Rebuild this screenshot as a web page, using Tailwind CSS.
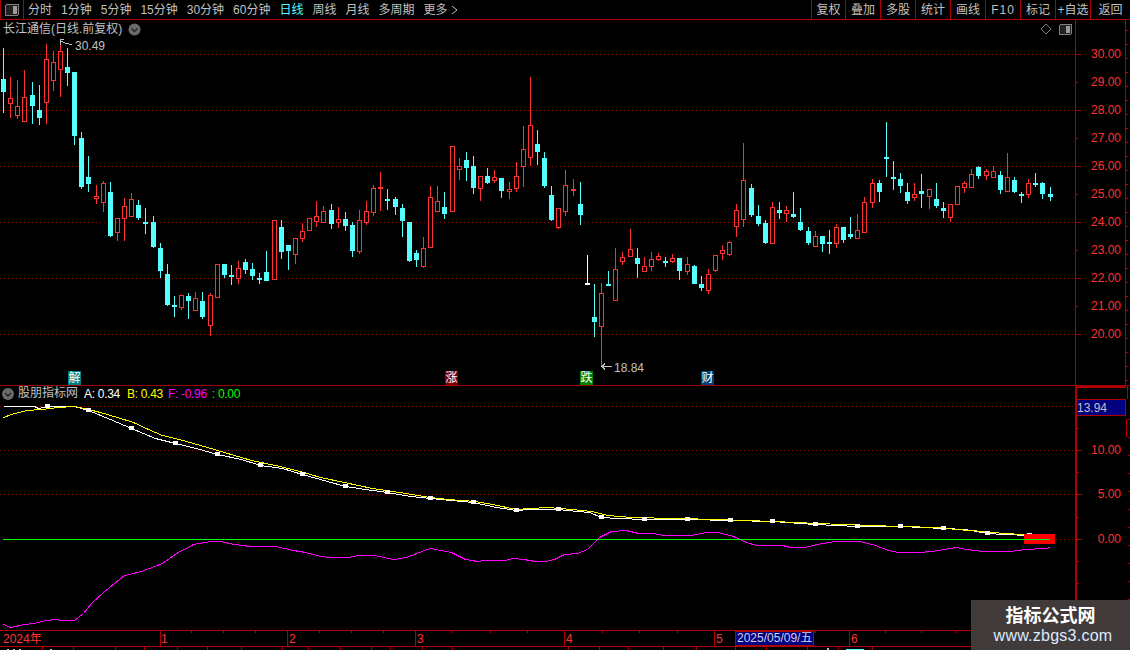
<!DOCTYPE html>
<html lang="zh-CN">
  <head>
    <meta charset="UTF-8" />
    <title>长江通信 日线</title>
    <script src="https://cdn.jsdelivr.net/npm/@tailwindcss/browser@4"></script>
  </head>
  <body class="relative w-[1130px] h-[650px] overflow-hidden bg-black text-[12px] leading-none text-[#c0c0c0] font-['Liberation_Sans','Noto_Sans_CJK_SC',sans-serif]">
    <!-- top toolbar -->
    <div class="flex h-[20px] border-b border-[#b00000]">
      <div class="flex w-[24px] items-center justify-center border-x border-[#b00000]">
        <svg width="14" height="12" viewBox="0 0 14 12" shape-rendering="crispEdges">
          <rect x="0.5" y="0.5" width="13" height="11" rx="1.5" fill="#222" stroke="#808080" />
          <rect x="8" y="2" width="4" height="8" fill="#9a9a9a" />
        </svg>
      </div>
      <nav class="flex items-center gap-[9px] pl-[4px]">
        <span>分时</span><span>1分钟</span><span>5分钟</span><span>15分钟</span><span>30分钟</span><span>60分钟</span>
        <span class="text-[#54ffff]">日线</span><span>周线</span><span>月线</span><span>多周期</span>
        <span class="flex items-center gap-[3px]">更多
          <svg width="7" height="10" viewBox="0 0 7 10"><path d="M1 1l5 4-5 4" fill="none" stroke="#c0c0c0" /></svg>
        </span>
      </nav>
      <div class="ml-auto flex">
        <span class="flex w-[34px] items-center justify-center border-l border-[#b00000]">复权</span>
        <span class="flex w-[35px] items-center justify-center border-l border-[#b00000]">叠加</span>
        <span class="flex w-[35px] items-center justify-center border-l border-[#b00000]">多股</span>
        <span class="flex w-[35px] items-center justify-center border-l border-[#b00000]">统计</span>
        <span class="flex w-[35px] items-center justify-center border-l border-[#b00000]">画线</span>
        <span class="flex w-[35px] items-center justify-center border-l border-[#b00000] tracking-[1px]">F10</span>
        <span class="flex w-[35px] items-center justify-center border-l border-[#b00000]">标记</span>
        <span class="flex w-[35px] items-center justify-center border-l border-[#b00000]">+自选</span>
        <span class="flex w-[40px] items-center justify-center border-l border-[#b00000]">返回</span>
      </div>
    </div>

    <!-- price panel -->
    <div class="flex h-[366px] border-b border-[#a00000]">
      <div class="relative w-[1075px]">
        <svg id="price-chart" class="absolute inset-0" width="1075" height="365" viewBox="0 20 1075 365" shape-rendering="crispEdges"></svg>
        <div class="absolute left-[3px] top-[3px] flex items-center gap-[6px]">
          <span class="leading-[13px]">长江通信(日线.前复权)</span>
          <svg width="13" height="13" viewBox="0 0 13 13"><circle cx="6.5" cy="6.5" r="6" fill="#6a6a6a" /><path d="M3.5 5.5l3 3 3-3" fill="none" stroke="#222" stroke-width="1.4" /></svg>
        </div>
        <span class="absolute left-[75px] top-[20px]">30.49</span>
        <span class="absolute left-[614px] top-[342px]">18.84</span>
        <span class="absolute left-[68px] bottom-0 flex h-[14px] w-[13px] items-center justify-center bg-[#008080] text-white">解</span>
        <span class="absolute left-[445px] bottom-0 flex h-[14px] w-[13px] items-center justify-center bg-[#800000] text-white">涨</span>
        <span class="absolute left-[580px] bottom-0 flex h-[14px] w-[13px] items-center justify-center bg-[#008000] text-white">跌</span>
        <span class="absolute left-[701px] bottom-0 flex h-[14px] w-[13px] items-center justify-center bg-[#003f6f] text-white">财</span>
        <div class="absolute right-[3px] top-[3px] flex items-center gap-[7px]">
          <svg width="12" height="12" viewBox="0 0 12 12"><path d="M6 1l5 5-5 5-5-5z" fill="none" stroke="#808080" /></svg>
          <svg width="13" height="11" viewBox="0 0 13 11" shape-rendering="crispEdges">
            <rect x="0.5" y="0.5" width="12" height="10" rx="1.5" fill="#222" stroke="#808080" />
            <rect x="7" y="2" width="4" height="7" fill="#9a9a9a" />
          </svg>
        </div>
      </div>
      <svg id="price-axis" width="55" height="365" viewBox="1075 20 55 365" shape-rendering="crispEdges"></svg>
    </div>

    <!-- indicator panel -->
    <div class="flex h-[244px]">
      <div class="relative w-[1075px]">
        <svg id="indicator-chart" class="absolute inset-0" width="1075" height="244" viewBox="0 386 1075 244" shape-rendering="crispEdges"></svg>
        <div class="absolute left-[2px] top-[1px] flex items-center tracking-[-0.3px]">
          <svg class="mr-[4px]" width="12" height="12" viewBox="0 0 12 12"><circle cx="6" cy="6" r="6" fill="#6a6a6a" /><path d="M3 5l3 3 3-3" fill="none" stroke="#222" stroke-width="1.4" /></svg>
          <span class="mr-[6px] leading-[13px] tracking-normal">股朋指标网</span>
          <span class="mr-[7px] text-white">A: 0.34</span>
          <span class="mr-[5px] text-[#ffff00]">B: 0.43</span>
          <span class="mr-[5px] text-[#ff00ff]">F: -0.96</span>
          <span class="text-[#00ff00]">: 0.00</span>
        </div>
      </div>
      <svg id="indicator-axis" width="55" height="244" viewBox="1075 386 55 244" shape-rendering="crispEdges"></svg>
    </div>

    <!-- time axis -->
    <svg id="time-axis" class="block" width="1130" height="20" viewBox="0 630 1130 20" shape-rendering="crispEdges"></svg>

    <!-- watermark -->
    <div class="absolute bottom-0 right-0 flex h-[50px] w-[159px] flex-col items-center bg-[#403b3a] pt-[6px]">
      <span class="text-[18px] font-bold leading-[20px] text-white">指标公式网</span>
      <span class="pl-[5px] text-[16px] leading-[19px] tracking-[0.25px] text-[#dceaff]">www.zbgs3.com</span>
    </div>

    <script>
      const RED = "#ff3232";
      const CYAN = "#54ffff";
      const LINE = "#b00000";
      const GRID = "#980000";

      // x, colour (0 cyan, 1 red, 2 white), high, body top, body bottom, low -- in page pixels
      const candles = [
        [3,0,48,79,92,113],[10,1,77,98,104,118],[17,1,80,106,116,119],[24,1,70,97,122,122],
        [32,0,82,95,106,124],[39,0,85,110,118,125],[46,1,44,59,103,124],[53,1,51,62,81,91],
        [60,1,43,51,70,97],[67,0,48,67,73,86],[74,0,72,72,136,145],[81,0,132,138,187,189],
        [88,0,156,177,184,192],[96,1,185,196,199,204],[103,1,181,183,203,212],[110,0,182,192,236,237],
        [117,1,218,218,233,241],[124,1,198,206,219,241],[131,1,193,199,217,217],[138,0,200,205,218,220],
        [145,0,208,222,224,234],[153,0,216,222,247,248],[160,0,243,248,271,278],[167,0,264,274,305,306],
        [174,0,296,305,307,317],[181,1,295,295,308,310],[188,0,293,296,301,319],[195,1,292,298,311,311],
        [202,0,292,301,317,319],[210,1,293,295,326,336],[217,1,264,264,298,298],[224,0,264,264,275,278],
        [231,0,265,275,277,285],[238,1,261,268,279,284],[245,0,259,262,270,274],[252,0,263,269,276,280],
        [259,0,273,278,280,284],[266,0,251,272,281,281],[274,1,220,220,280,280],[281,0,220,227,252,259],
        [288,0,245,245,251,270],[295,1,238,238,255,264],[302,1,223,231,239,242],[309,1,218,218,231,231],
        [316,1,201,216,222,227],[323,1,206,211,223,223],[331,0,204,210,224,229],[338,1,207,219,223,228],
        [345,0,212,219,226,231],[352,0,222,225,251,257],[359,1,210,220,252,254],[366,1,201,211,223,225],
        [373,1,185,188,213,216],[380,1,172,187,189,211],[387,0,189,199,201,210],[395,0,197,199,207,215],
        [402,0,204,208,221,237],[409,0,222,222,261,262],[416,0,250,253,260,267],[423,1,237,248,267,268],
        [430,1,186,197,248,248],[437,1,186,201,212,212],[444,0,192,207,214,219],[452,1,146,146,212,212],
        [459,1,158,166,170,180],[466,0,152,160,168,181],[473,0,156,166,188,194],[480,1,176,176,189,201],
        [487,0,168,176,183,184],[494,1,170,177,181,183],[501,0,178,178,191,198],[509,1,182,189,192,199],
        [516,1,162,176,189,192],[523,1,126,149,167,187],[530,1,77,125,158,166],[537,0,130,144,152,165],
        [544,0,152,158,186,188],[551,0,186,195,220,221],[558,1,208,208,228,229],[565,1,170,185,212,216],
        [573,1,179,189,190,196],[580,0,182,204,215,225],[587,2,255,283,284,284],[594,0,284,317,322,337],
        [601,1,283,293,327,366],[608,0,271,284,286,286],[615,1,248,269,301,301],[622,1,252,257,262,265],
        [630,1,229,249,257,257],[637,0,248,258,264,278],[644,1,257,266,272,272],[651,1,252,259,267,271],
        [658,1,253,256,260,261],[665,0,257,261,262,267],[672,1,254,258,262,263],[679,0,258,258,271,280],
        [687,1,257,264,272,275],[694,0,265,266,284,284],[701,0,276,284,288,291],[708,1,269,274,291,294],
        [715,1,255,255,271,272],[722,1,245,250,254,260],[729,1,241,242,255,256],[736,1,204,210,227,237],
        [743,1,143,180,220,227],[751,0,184,188,215,217],[758,0,205,216,224,226],[765,0,220,223,243,244],
        [772,1,202,207,244,244],[779,0,202,210,213,219],[786,1,206,210,214,222],[793,0,192,214,217,218],
        [800,0,208,222,230,231],[808,0,227,231,243,245],[815,1,231,236,247,247],[822,0,236,236,244,252],
        [829,0,230,242,243,254],[836,1,224,227,244,248],[843,0,227,227,240,243],[850,0,217,234,237,239],
        [857,1,214,230,239,239],[864,1,197,202,233,233],[872,1,179,183,203,208],[879,0,180,183,192,202],
        [886,0,122,157,159,177],[893,0,161,177,179,190],[900,0,173,179,186,193],[907,0,183,192,201,204],
        [914,1,183,194,198,201],[921,0,174,191,194,208],[929,1,189,189,197,209],[936,0,183,199,206,208],
        [943,0,202,208,211,218],[950,1,204,204,218,222],[957,1,186,186,205,205],[964,1,181,183,188,193],
        [971,1,169,174,188,188],[978,0,166,167,176,179],[986,1,169,171,176,180],[993,1,166,171,178,178],
        [1000,0,171,175,190,194],[1007,1,153,177,192,192],[1014,0,177,180,192,193],[1021,0,192,194,195,203],
        [1028,1,179,183,195,198],[1035,0,173,183,184,187],[1042,0,182,183,194,199],[1050,0,187,194,197,201],
      ];

      const yellowLine = [[3,417],[14,413],[27,410],[41,409],[58,407],[74,406],[84,408],[100,412],[117,417],[133,422],[148,429],[162,435],[179,439],[207,447],[224,452],[251,460],[275,465],[300,471],[320,477],[344,482],[372,488],[399,492],[430,497],[448,499],[475,501],[492,504],[516,509],[530,508],[547,507],[571,509],[591,511],[608,515],[631,517],[675,518],[719,519],[773,521],[817,523],[868,525],[902,526],[936,527],[956,529],[983,531],[1003,533],[1024,534]];
      const whiteLine = [[3,406],[34,406],[38,408],[47,406],[59,406],[74,406],[88,410],[110,419],[131,428],[155,438],[175,443],[196,448],[217,454],[241,459],[260,465],[282,468],[302,474],[327,481],[345,486],[365,489],[387,492],[410,496],[430,498],[451,500],[473,502],[496,507],[516,510],[530,509],[558,509],[577,511],[589,512],[601,517],[618,518],[644,519],[687,519],[730,520],[772,521],[815,524],[857,526],[900,526],[943,528],[965,529],[987,533],[1003,534],[1029,535]];
      const magentaLine = [[3,624],[10,627],[24,624],[34,623],[45,620],[57,619],[60,620],[74,620],[83,613],[91,603],[103,592],[114,583],[124,575],[141,571],[162,563],[176,553],[193,544],[210,541],[220,541],[234,544],[250,546],[275,546],[293,550],[305,552],[320,556],[329,557],[348,557],[358,555],[374,555],[393,559],[406,557],[424,550],[430,548],[451,552],[465,559],[477,561],[485,560],[504,560],[513,558],[523,559],[535,561],[545,561],[554,559],[564,554],[577,553],[587,549],[599,537],[611,531],[626,530],[638,533],[653,533],[663,535],[691,535],[706,532],[718,532],[733,536],[746,542],[756,545],[782,545],[790,547],[804,547],[817,544],[834,541],[860,541],[875,545],[888,550],[898,552],[917,552],[932,551],[956,547],[966,549],[983,551],[1010,551],[1025,549],[1045,548],[1050,547]];
      const whiteMarkers = [[47,406],[88,410],[131,428],[175,443],[217,454],[260,465],[302,474],[345,486],[387,492],[430,498],[473,502],[516,510],[558,509],[601,517],[644,519],[687,519],[730,520],[772,521],[815,524],[857,526],[900,526],[943,528],[987,533],[1029,535]];

      const rect = (x, y, w, h, fill) => `<rect x="${x}" y="${y}" width="${w}" height="${h}" fill="${fill}"/>`;
      const hline = (x1, x2, y, stroke) => `<line x1="${x1}" x2="${x2}" y1="${y + 0.5}" y2="${y + 0.5}" stroke="${stroke}"/>`;
      // one pixel on, three off
      const dotted = (y, x1 = 0, x2 = 1075) => {
        let s = "";
        for (let x = x1; x < x2; x += 4) s += rect(x, y, 1, 1, GRID);
        return s;
      };
      const poly = (pts, stroke) => `<polyline points="${pts.map((p) => p[0] + 0.5 + "," + (p[1] + 0.5)).join(" ")}" fill="none" stroke="${stroke}"/>`;
      const label = (x, y, str, fill = RED, anchor = "end") => `<text x="${x}" y="${y}" fill="${fill}" font-size="12" text-anchor="${anchor}">${str}</text>`;

      function candleSvg([x, c, hi, top, bot, lo]) {
        const color = c === 0 ? CYAN : c === 1 ? RED : "#ffffff";
        const h = bot - top;
        if (c === 1 && h > 2) {
          let s = "";
          if (top > hi) s += rect(x, hi, 1, top - hi, color);
          if (lo > bot) s += rect(x, bot, 1, lo - bot, color);
          return s + `<rect x="${x - 1.5}" y="${top + 0.5}" width="4" height="${h - 1}" fill="none" stroke="${color}"/>`;
        }
        return rect(x, hi, 1, lo - hi, color) + rect(x - 2, top, 5, Math.max(h, 2), color);
      }

      let price = "";
      for (let y = 54; y <= 334; y += 56) price += dotted(y);
      price += candles.map(candleSvg).join("");
      // high / low flags
      price += `<g fill="none" stroke="#c0c0c0"><path d="M60.5 45V39.5H64M61 41L66 43.5L72 44.5"/><path d="M602 366.5H612M605 363.5L602 366.5L605 369.5"/></g>`;
      document.getElementById("price-chart").innerHTML = price;

      let priceAxis = rect(1075, 20, 1, 365, LINE);
      for (let i = 0; i <= 10; i++) {
        const y = 54 + i * 28;
        const major = i % 2 === 0;
        priceAxis += rect(1076, y, major ? 5 : 2, 1, LINE);
        priceAxis += label(1121, y + 4, (30 - i).toFixed(2));
      }
      priceAxis += rect(1125, 20, 1, 365, LINE);
      for (let y = 30; y < 385; y += 14) priceAxis += rect(1126, y, 2, 1, LINE);
      document.getElementById("price-axis").innerHTML = priceAxis;

      let ind = dotted(406) + dotted(450) + dotted(494) + dotted(539, 1052, 1075);
      ind += poly(whiteLine, "#ffffff") + poly(yellowLine, "#ffff00") + poly(magentaLine, "#ff00ff");
      ind += whiteMarkers.map(([x, y]) => rect(x - 2, y - 2, 5, 4, "#ffffff")).join("");
      ind += rect(1024, 534, 31, 10, "#ff0000");
      ind += hline(3, 1050, 539, "#00ff00");
      document.getElementById("indicator-chart").innerHTML = ind;

      let indAxis = rect(1075, 386, 2, 244, LINE) + rect(1075, 386, 51, 2, LINE);
      for (const y of [428, 450, 472, 494, 517, 539, 561, 583]) {
        const major = [450, 494, 539].includes(y);
        indAxis += rect(1077, y, major ? 5 : 2, 1, LINE);
      }
      indAxis += label(1121, 454, "10.00") + label(1121, 498, "5.00") + label(1121, 543, "0.00");
      indAxis += `<rect x="1076.5" y="399.5" width="49" height="16" fill="#000080" stroke="${LINE}"/>`;
      indAxis += label(1077, 412, "13.94", "#c0c0c0", "start");
      indAxis += rect(1127, 386, 1, 13, LINE) + rect(1126, 419, 1, 18, LINE);
      for (let y = 419; y < 620; y += 18) indAxis += rect(1128, y, 2, 1, LINE);
      document.getElementById("indicator-axis").innerHTML = indAxis;

      let time = rect(0, 630, 1130, 1, LINE) + rect(0, 646, 1130, 1, LINE);
      for (const x of [191, 223, 255, 319, 351, 383, 452, 490, 527, 602, 639, 677, 815, 885, 921, 956, 992]) time += rect(x, 631, 1, 2, LINE);
      for (const x of [160, 287, 415, 564, 714, 849]) time += rect(x, 631, 1, 15, LINE);
      time += label(3, 643, "2024年", RED, "start");
      [[161, "1"], [289, "2"], [417, "3"], [566, "4"], [716, "5"], [851, "6"]].forEach(([x, s]) => (time += label(x, 643, s, RED, "start")));
      time += `<rect x="735.5" y="631.5" width="78" height="14" fill="#000080" stroke="${LINE}"/>`;
      time += label(737, 642, "2025/05/09/五", "#d0d0e8", "start");
      // the status bar below is cut off by the window, only its separators and a few text tops show
      for (const x of [42, 73, 115, 144, 177, 207, 241, 282, 308, 340, 371, 390, 422, 452, 568, 599, 628, 663, 696, 735, 766, 807, 838, 872]) time += rect(x, 647, 1, 3, LINE);
      time += rect(7, 649, 2, 1, "#c0c0c0") + rect(13, 649, 2, 1, "#c0c0c0") + rect(19, 649, 2, 1, "#c0c0c0") + rect(50, 649, 2, 1, "#c0c0c0");
      time += rect(827, 648, 2, 2, "#c0c0c0") + rect(846, 649, 18, 1, CYAN);
      document.getElementById("time-axis").innerHTML = time;
    </script>
  </body>
</html>
